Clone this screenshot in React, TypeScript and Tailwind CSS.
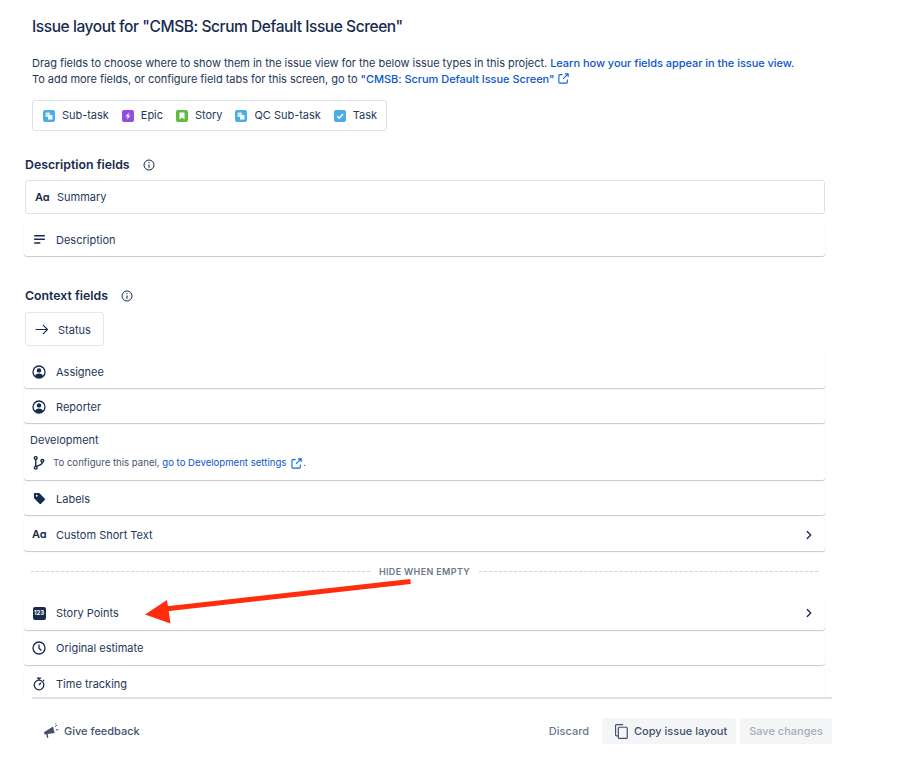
import type { ReactNode } from "react";
import { ChevronRight } from "lucide-react";

const NAVY = "#172b4d";

function ExternalIcon({ className }: { className?: string }) {
  return (
    <svg viewBox="0 0 12 12" fill="none" stroke="#0c66e4" strokeWidth="1.2" className={className}>
      <path d="M5 1.8H2a1 1 0 0 0-1 1V10a1 1 0 0 0 1 1h7.2a1 1 0 0 0 1-1V7" />
      <path d="M5.5 6.5 11 1M7.6 .9H11.1V4.4" />
    </svg>
  );
}

function InfoIcon() {
  return (
    <svg viewBox="0 0 12 12" fill="none" className="h-[12px] w-[12px]">
      <circle cx="6" cy="6" r="5" stroke={NAVY} strokeWidth="1" />
      <path d="M6 5.4V8.8" stroke={NAVY} strokeWidth="1.1" />
      <circle cx="6" cy="3.6" r=".7" fill={NAVY} />
    </svg>
  );
}

function TypeIcon({ color, kind }: { color: string; kind: "sub" | "epic" | "story" | "task" }) {
  return (
    <svg viewBox="0 0 12 12" className="h-[12px] w-[12px] shrink-0">
      <rect width="12" height="12" rx="2" fill={color} />
      {kind === "sub" && (
        <>
          <rect x="2.5" y="2.5" width="4.5" height="4.5" rx=".6" fill="#fff" fillOpacity=".75" />
          <rect x="5" y="5" width="4.5" height="4.5" rx=".6" fill="#fff" />
        </>
      )}
      {kind === "epic" && <path d="M6.8 2.4 3.6 6.6H5.6L5.2 9.6 8.4 5.4H6.4Z" fill="#fff" />}
      {kind === "story" && <path d="M3.5 2.5H8.5V9.5L6 7.6 3.5 9.5Z" fill="#fff" />}
      {kind === "task" && <path d="M3.2 6.2 5.2 8.2 8.9 4" fill="none" stroke="#fff" strokeWidth="1.5" />}
    </svg>
  );
}

function UserIcon() {
  return (
    <svg viewBox="0 0 14 14" className="h-[14px] w-[14px]">
      <circle cx="7" cy="7" r="6" fill="none" stroke={NAVY} strokeWidth="1.3" />
      <circle cx="7" cy="5.4" r="2.2" fill={NAVY} />
      <path d="M2.9 11.2C3.4 9.3 5 8.4 7 8.4s3.6.9 4.1 2.8A6 6 0 0 1 7 13a6 6 0 0 1-4.1-1.8Z" fill={NAVY} />
    </svg>
  );
}

function AaIcon() {
  return (
    <span className="w-[14px] text-center text-[11px] font-semibold leading-none tracking-[-0.2px] text-[#172b4d]">
      Aɑ
    </span>
  );
}

function Field({
  icon,
  label,
  chevron,
  className = "h-[33px]",
}: {
  icon: ReactNode;
  label: string;
  chevron?: boolean;
  className?: string;
}) {
  return (
    <div
      className={`flex w-[801px] items-center rounded-[3px] bg-white pl-[8px] pr-[9px] text-[11px] text-[#253858] shadow-[0_1px_1px_#c1c7d4,0_0_1px_#e8eaef] ${className}`}
    >
      <span className="flex w-[14px] justify-center">{icon}</span>
      <span className="ml-[10px] pt-px">{label}</span>
      {chevron && <ChevronRight className="ml-auto h-[14px] w-[14px] text-[#172b4d]" strokeWidth={2.2} />}
    </div>
  );
}

function Heading({ children }: { children: string }) {
  return (
    <div className="flex items-center gap-[13px] text-[12.3px] font-semibold leading-[16px] text-[#172b4d]">
      {children}
      <InfoIcon />
    </div>
  );
}

const issueTypes = [
  { label: "Sub-task", color: "#4bade8", kind: "sub" as const },
  { label: "Epic", color: "#904ee2", kind: "epic" as const },
  { label: "Story", color: "#63ba3c", kind: "story" as const },
  { label: "QC Sub-task", color: "#4bade8", kind: "sub" as const },
  { label: "Task", color: "#4bade8", kind: "task" as const },
];

export default function App() {
  return (
    <div className="relative h-[759px] w-[916px] overflow-hidden bg-white font-['Inter',sans-serif] text-[#172b4d] antialiased">
      <div className="flex h-[697px] flex-col overflow-hidden">
        <div className="pl-[32px] pt-[16px]">
          <h1 className="text-[15.5px] font-medium leading-[22px] tracking-[-0.43px] text-[#172b4d]">
            Issue layout for "CMSB: Scrum Default Issue Screen"
          </h1>
          <p className="mt-[17px] text-[11px] leading-[16px] tracking-[-0.04px] text-[#253858]">
            Drag fields to choose where to show them in the issue view for the below issue types in this project.{" "}
            <span className="font-medium text-[#0c57c9]">Learn how your fields appear in the issue view.</span>
            <br />
            To add more fields, or configure field tabs for this screen, go to{" "}
            <span className="font-medium text-[#0c57c9]">"CMSB: Scrum Default Issue Screen"</span>
            <ExternalIcon className="ml-[3px] inline h-[11px] w-[11px] align-[-1px]" />
          </p>
          <div className="mt-[13px] flex h-[31px] w-[355px] items-center gap-[13px] rounded-[3px] border border-[#dfe1e6] pl-[10px] text-[11px] tracking-[-0.03px] text-[#253858]">
            {issueTypes.map((t) => (
              <span key={t.label} className="flex items-center gap-[7px]">
                <TypeIcon color={t.color} kind={t.kind} />
                <span>{t.label}</span>
              </span>
            ))}
          </div>
        </div>

        <div className="flex flex-col pl-[25px] pt-[26px]">
          <Heading>Description fields</Heading>
          <div className="mt-[7px] flex h-[34px] w-[800px] items-center rounded-[3px] border border-[#dfe1e6] pl-[9px] text-[11px] text-[#253858]">
            <span className="flex w-[14px] justify-center">
              <AaIcon />
            </span>
            <span className="ml-[8px] pt-px">Summary</span>
          </div>
          <div className="-ml-px mt-[9px]">
            <Field
              label="Description"
              icon={
                <svg viewBox="0 0 12 10" className="h-[9px] w-[11px]" fill={NAVY}>
                  <rect width="12" height="1.6" rx=".4" />
                  <rect y="4" width="12" height="1.6" rx=".4" />
                  <rect y="8" width="7" height="1.6" rx=".4" />
                </svg>
              }
            />
          </div>

          <div className="mt-[32px]">
            <Heading>Context fields</Heading>
          </div>
          <div className="mt-[8px] flex h-[34px] w-[79px] items-center rounded-[3px] border border-[#e4e6ea] pl-[9px] text-[11px] text-[#253858]">
            <svg viewBox="0 0 14 12" className="h-[11px] w-[14px]" fill="none" stroke={NAVY} strokeWidth="1.2">
              <path d="M0 6H13M8 1l5 5-5 5" />
            </svg>
            <span className="ml-[9px] pt-[2px]">Status</span>
          </div>

          <div className="-ml-px mt-[9px] flex flex-col gap-[2px]">
            <Field label="Assignee" icon={<UserIcon />} />
            <Field label="Reporter" icon={<UserIcon />} />
            <div className="flex h-[55px] w-[801px] flex-col rounded-[3px] bg-white pl-[6px] pt-[8px] text-[#253858] shadow-[0_1px_1px_#c1c7d4,0_0_1px_#e8eaef]">
              <span className="text-[11px] leading-[14px]">Development</span>
              <div className="mt-[9px] flex items-center text-[9.6px] text-[#44546f]">
                <svg viewBox="0 0 12 15" className="ml-[3px] mr-[8px] h-[14px] w-[12px]" fill="none" stroke={NAVY} strokeWidth="1.5">
                  <circle cx="2.5" cy="2.2" r="1.5" />
                  <circle cx="2.5" cy="12.6" r="1.5" />
                  <circle cx="9.6" cy="5.2" r="1.5" />
                  <path d="M2.5 3.7v7.4M9.6 6.7c0 2.6-3 3-6.6 4.6" />
                </svg>
                To configure this panel,&nbsp;
                <span className="text-[#0c57c9]">go to Development settings</span>
                <ExternalIcon className="ml-[5px] h-[11px] w-[11px]" />
                <span className="ml-[1px]">.</span>
              </div>
            </div>
            <div className="flex flex-col gap-[3px]">
              <Field
                label="Labels"
                icon={
                  <svg viewBox="0 0 14 14" className="h-[13px] w-[13px]">
                    <path
                      d="M1 2.2C1 1.5 1.5 1 2.2 1H6c.4 0 .7.1 1 .4l5.6 5.6c.5.5.5 1.2 0 1.7l-3.9 3.9c-.5.5-1.2.5-1.7 0L1.4 7C1.1 6.7 1 6.4 1 6Z"
                      fill={NAVY}
                    />
                    <circle cx="4" cy="4" r="1" fill="#fff" />
                  </svg>
                }
              />
              <Field label="Custom Short Text" icon={<AaIcon />} chevron />
            </div>
          </div>

          <div className="mt-[14px] flex w-[793px] items-center pl-[6px] text-[9px] font-semibold tracking-[0.35px] text-[#6b778c]">
            <div className="flex-1 border-t border-dashed border-[#cfd3da]" />
            <span className="mx-[9px]">HIDE WHEN EMPTY</span>
            <div className="flex-1 border-t border-dashed border-[#cfd3da]" />
          </div>

          <div className="-ml-px mt-[18px] flex flex-col gap-[2px]">
            <Field
              label="Story Points"
              chevron
              icon={
                <span className="flex h-[13px] w-[13px] items-center justify-center rounded-[2px] bg-[#172b4d] text-[6px] font-bold leading-none text-white">
                  123
                </span>
              }
            />
            <Field
              label="Original estimate"
              icon={
                <svg viewBox="0 0 14 14" className="h-[14px] w-[14px]" fill="none" stroke={NAVY} strokeWidth="1.3">
                  <circle cx="7" cy="7" r="6" />
                  <path d="M7 3.4V7.2L9.4 9.4" />
                </svg>
              }
            />
            <Field
              label="Time tracking"
              className="mt-px h-[33px]"
              icon={
                <svg viewBox="0 0 14 14" className="h-[14px] w-[14px]" fill="none" stroke={NAVY} strokeWidth="1.3">
                  <circle cx="7" cy="8" r="4.8" />
                  <path d="M5 1.2H9M7 1.2V3M7 8 9 5.8M11 3l1 1" />
                </svg>
              }
            />
          </div>
        </div>
      </div>

      <div className="ml-[32px] h-[2px] w-[800px] bg-[#dfe1e6]" />

      <div className="flex w-[832px] items-center pl-[43px] pt-[19px] text-[11px] font-medium text-[#42526e]">
        <svg viewBox="0 0 16 16" className="mr-[5px] h-[16px] w-[16px]" fill="#42526e">
          <path d="M1 9.2 10 3.4 11.6 10 4.6 11 5.4 14.6 4 15 3.2 11.2 1.6 11.4Z" />
          <path d="M12 3.8 14 2M12.8 6.8H15.4M12.4 1.4 12.8 .4" stroke="#42526e" strokeWidth="1" />
        </svg>
        Give feedback
        <span className="ml-auto text-[#6b778c]">Discard</span>
        <button className="ml-[13px] flex h-[26px] w-[134px] items-center rounded-[3px] bg-[#f4f5f7] pl-[13px] text-[#42526e]">
          <svg viewBox="0 0 14 16" className="mr-[6px] h-[15px] w-[13px]" fill="none" stroke="#42526e" strokeWidth="1.3">
            <path d="M3 12.6H1.6a1 1 0 0 1-1-1V1.6a1 1 0 0 1 1-1H8.6" />
            <rect x="3.6" y="3.4" width="9.6" height="12" rx="1" />
          </svg>
          Copy issue layout
        </button>
        <button className="ml-[4px] h-[26px] w-[92px] rounded-[3px] bg-[#f4f5f7] text-[#a5adba]">Save changes</button>
      </div>

      <svg viewBox="0 0 916 759" className="pointer-events-none absolute left-0 top-0 h-[759px] w-[916px]">
        <path d="M410.5 581.5 165 609" stroke="#ff2d0d" strokeWidth="5" fill="none" />
        <path d="M145 614.5 167 600 170.5 623.5Z" fill="#ff2d0d" />
      </svg>
    </div>
  );
}
